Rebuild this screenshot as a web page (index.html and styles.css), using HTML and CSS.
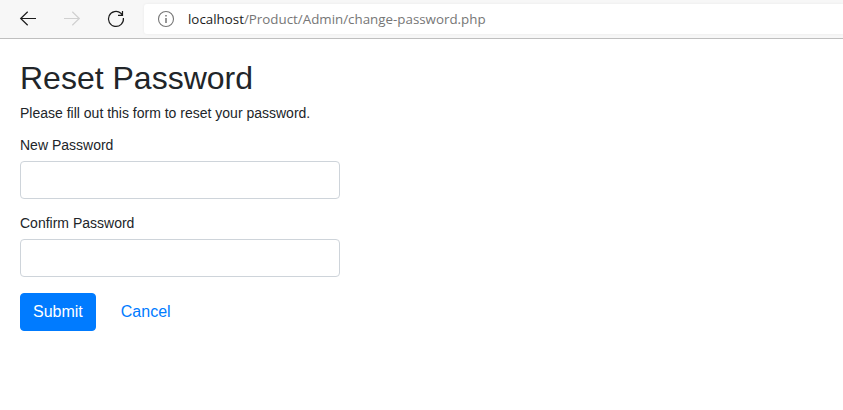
FILE: index.html
```html
<!DOCTYPE html>
<html lang="en">
<head>
<meta charset="utf-8">
<title>Reset Password</title>
<link rel="stylesheet" href="styles.css">
</head>
<body>
<header class="toolbar">
  <nav class="nav">
    <svg class="icon" width="20" height="20" viewBox="0 0 20 20"><path d="M18 9.5H2.7M9.7 2.7L2.7 9.5L9.7 16.3"/></svg>
    <svg class="icon icon-disabled" width="20" height="20" viewBox="0 0 20 20"><path d="M2 9.5H17.3M10.3 2.7L17.3 9.5L10.3 16.3"/></svg>
    <svg class="icon" width="20" height="20" viewBox="0 0 20 20"><path d="M17.4 9A7.5 7.5 0 1 1 14.9 4.3L16.5 6M16.5 2V6.4H12"/></svg>
  </nav>
  <div class="address">
    <svg class="icon icon-info" width="18" height="18" viewBox="0 0 18 18"><circle cx="9" cy="9" r="7.5"/><path class="info-mark" d="M9 8V13M9 5V6.5"/></svg>
    <span class="url"><span class="host">localhost</span>/Product/Admin/change-password.php</span>
  </div>
</header>
<main class="wrapper">
  <h2 class="title">Reset Password</h2>
  <p class="lead">Please fill out this form to reset your password.</p>
  <form>
    <div class="group">
      <label for="new">New Password</label>
      <input id="new" type="password" class="control">
    </div>
    <div class="group">
      <label for="confirm">Confirm Password</label>
      <input id="confirm" type="password" class="control">
    </div>
    <div class="actions">
      <button type="submit" class="btn btn-primary">Submit</button>
      <a class="btn btn-link" href="#">Cancel</a>
    </div>
  </form>
</main>
</body>
</html>
```
FILE: styles.css
```css
* { box-sizing: border-box; }
body {
  margin: 0;
  background: #fff;
  color: #212529;
  font: 14px/21px "Liberation Sans", Arial, sans-serif;
}
.toolbar {
  display: flex;
  height: 39px;
  background: #f7f7f7;
  border-bottom: 1px solid #bfbfbf;
}
.nav {
  display: flex;
  flex: none;
  width: 144px;
  gap: 24px;
  padding: 9px 0 0 18px;
}
.icon {
  flex: none;
  fill: none;
  stroke: #1b1b1b;
  stroke-width: 1.2;
}
.icon-disabled { stroke: #d0d0d0; }
.icon-info { stroke: #767676; stroke-width: 1.1; }
.info-mark { stroke-width: 1.5; }
.address {
  display: flex;
  flex: 1;
  align-items: center;
  gap: 13px;
  height: 30px;
  margin-top: 4px;
  padding-left: 13px;
  background: #fff;
  border-radius: 3px 0 0 3px;
  box-shadow: 0 0 3px rgba(0, 0, 0, 0.06);
}
.url {
  color: #767676;
  font: 13.35px/20px "Open Sans", "Noto Sans", sans-serif;
  white-space: nowrap;
}
.host { color: #1b1b1b; }
.wrapper { width: 360px; padding: 20px; }
.title {
  margin: 0 0 6px;
  font-size: 32px;
  font-weight: 400;
  line-height: 38px;
}
.lead { margin: 0 0 11px; }
.group { margin-bottom: 14px; }
.group label { display: block; margin-bottom: 5px; }
.control {
  display: block;
  width: 100%;
  height: 38px;
  border: 1px solid #ced4da;
  border-radius: 4px;
}
.actions { display: flex; gap: 12px; margin-top: 16px; }
.btn {
  padding: 6px 12px;
  border: 1px solid transparent;
  border-radius: 4px;
  font: 16px/24px "Liberation Sans", Arial, sans-serif;
  text-decoration: none;
}
.btn-primary { background: #007bff; border-color: #007bff; color: #fff; }
.btn-link { color: #007bff; }
```
